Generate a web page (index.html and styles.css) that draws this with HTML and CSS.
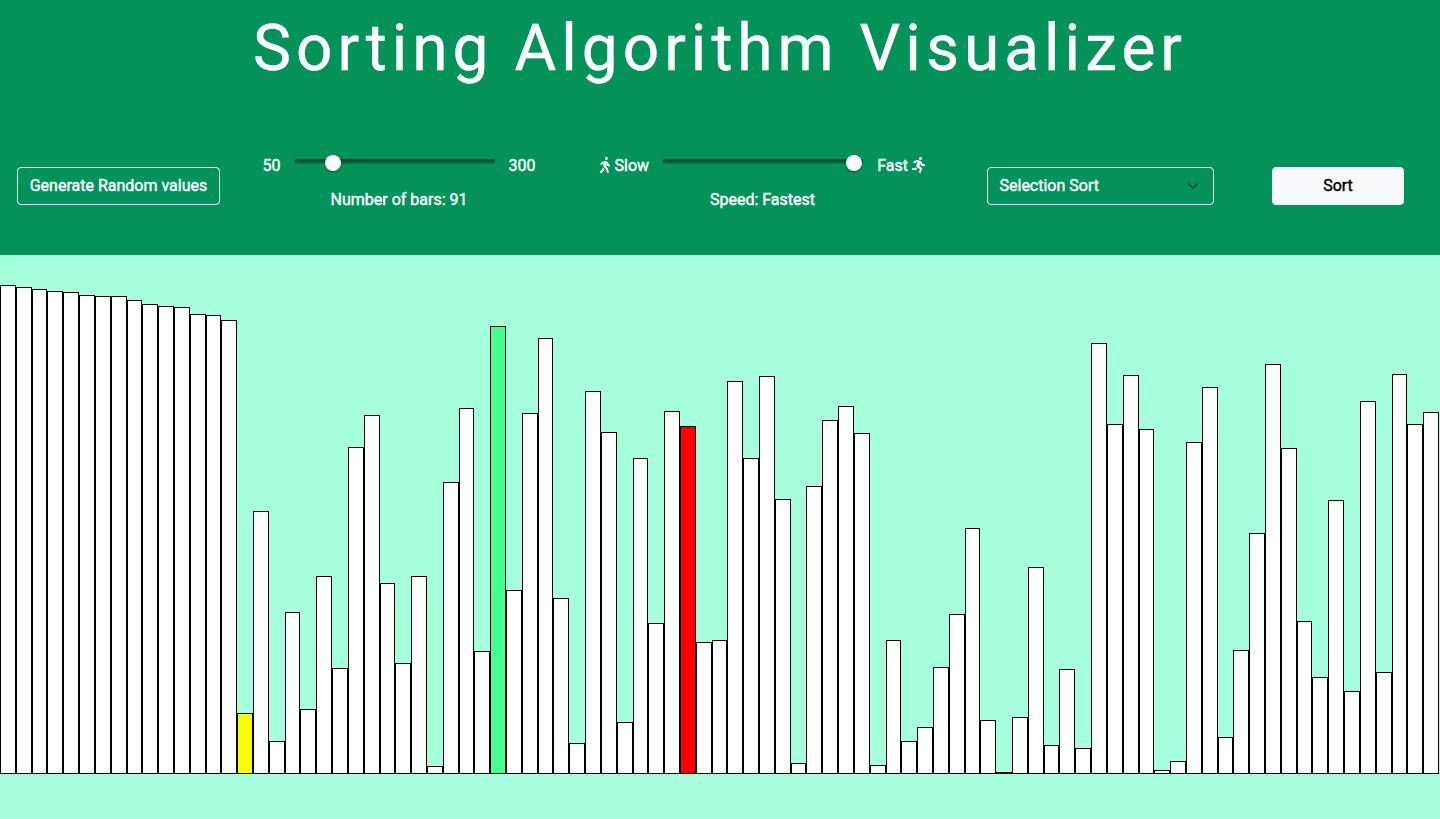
FILE: index.html
```html
<!DOCTYPE html>
<html lang="en">
<head>
<meta charset="utf-8">
<title>Sorting Algorithm Visualizer</title>
<link rel="stylesheet" href="styles.css">
</head>
<body>
<header class="header">
  <h1 class="title">Sorting Algorithm Visualizer</h1>
  <div class="controls">
    <button class="btn btn-outline">Generate Random values</button>
    <div class="control control-bars">
      <div class="range-row">
        <span class="range-label">50</span>
        <div class="slider"><div class="thumb thumb-bars"></div></div>
        <span class="range-label">300</span>
      </div>
      <div class="caption">Number of bars: 91</div>
    </div>
    <div class="control control-speed">
      <div class="range-row">
        <span class="range-label"><svg class="icon icon-walk" viewBox="0 0 320 512"><path d="M208 96c26.5 0 48-21.5 48-48S234.5 0 208 0s-48 21.5-48 48 21.5 48 48 48zm94.5 149.1l-23.3-11.8-9.7-29.4c-14.7-44.6-55.7-75.8-102.2-75.9-36-.1-55.9 10.1-93.3 25.2-21.6 8.7-39.3 25.2-49.7 46.2L17.6 213c-7.8 15.8-1.5 35 14.2 42.9 15.6 7.9 34.6 1.5 42.5-14.3L81 228c3.5-7 9.3-12.5 16.5-15.4l26.8-10.8-15.2 60.7c-5.2 20.8.4 42.9 14.9 58.8l59.9 65.4c7.2 7.9 12.3 17.4 14.9 27.7l18.3 73.3c4.3 17.1 21.7 27.6 38.8 23.3 17.1-4.3 27.6-21.7 23.3-38.8l-22.2-89c-2.6-10.3-7.7-19.9-14.9-27.7l-45.5-49.7 17.2-68.7 5.5 16.5c5.3 16.1 16.7 29.4 31.7 37l23.3 11.8c15.6 7.9 34.6 1.5 42.5-14.3 7.7-15.7 1.4-35.1-14.3-43zM73.6 385.8c-3.2 8.1-8 15.4-14.2 21.5l-50 50.1c-12.5 12.5-12.5 32.8 0 45.3s32.7 12.5 45.2 0l59.4-59.4c6.1-6.1 10.9-13.4 14.2-21.5l13.5-33.8c-55.3-60.3-38.7-41.8-47.4-53.7l-20.7 51.5z"/></svg>Slow</span>
        <div class="slider"><div class="thumb thumb-speed"></div></div>
        <span class="range-label">Fast<svg class="icon icon-run" viewBox="0 0 416 512"><path d="M272 96c26.51 0 48-21.49 48-48S298.51 0 272 0s-48 21.49-48 48 21.49 48 48 48zM113.69 317.47l-14.8 34.52H32c-17.67 0-32 14.33-32 32s14.33 32 32 32h77.45c19.25 0 36.58-11.44 44.11-29.09l8.79-20.52-10.67-6.3c-17.32-10.23-30.06-25.37-37.99-42.61zM384 223.99h-44.03l-26.06-53.25c-12.5-25.55-35.45-44.23-61.78-50.94l-71.08-21.14c-28.3-6.8-57.77-.55-80.84 17.14l-39.67 30.41c-14.03 10.75-16.69 30.83-5.94 44.86s30.84 16.69 44.86 5.94l39.66-30.41c7.67-5.89 17.44-8 25.27-6.14l14.7 4.37-37.46 87.39c-12.62 29.48-1.31 64.01 26.3 80.31l84.98 50.17-27.47 87.73c-5.28 16.86 4.11 34.82 20.97 40.1 3.19 1 6.41 1.48 9.58 1.48 13.61 0 26.23-8.77 30.52-22.45l31.64-101.06c5.91-20.77-2.89-43.08-21.64-54.5l-61.24-36.14 31.31-78.28 20.27 41.43c8 16.34 24.92 26.89 43.11 26.89H384c17.67 0 32-14.33 32-32s-14.33-31.99-32-31.99z"/></svg></span>
      </div>
      <div class="caption">Speed: Fastest</div>
    </div>
    <div class="select">Selection Sort<svg class="chevron" viewBox="0 0 16 16"><path d="m2 5 6 6 6-6"/></svg></div>
    <button class="btn btn-light">Sort</button>
  </div>
</header>
<main class="bars" id="bars"></main>
<script src="bars.js"></script>
</body>
</html>
```
FILE: styles.css
```css
* { box-sizing: border-box; }

body {
  margin: 0;
  height: 819px;
  overflow: hidden;
  background: #a5ffdc;
  font-family: Roboto, sans-serif;
  font-size: 16px;
  line-height: 24px;
  color: #fff;
}

.header { height: 255px; background: #03925a; }

.title {
  margin: 0;
  padding-top: 10px;
  text-align: center;
  font-size: 64px;
  font-weight: 400;
  line-height: 77px;
  letter-spacing: 5px;
  -webkit-text-stroke: 0.4px currentColor;
}

.controls {
  display: flex;
  align-items: flex-start;
  padding: 66px 0 0 17px;
  -webkit-text-stroke: 0.4px currentColor;
}

.btn {
  flex: none;
  height: 38px;
  margin-top: 14px;
  padding: 0;
  border-radius: 4px;
  font: inherit;
  -webkit-text-stroke: inherit;
}
.btn-outline { width: 203px; border: 1px solid #f8f9fa; background: transparent; color: #fff; }
.btn-light { width: 132px; margin-left: 58px; border: 1px solid #f8f9fa; background: #f8f9fa; color: #000; }

.control { flex: none; padding-top: 1px; }
.control-bars { margin-left: 42.5px; width: 273px; }
.control-speed { margin-left: 64.5px; width: 325px; }

.range-row { display: flex; justify-content: space-between; height: 24px; }
.range-label { display: flex; align-items: center; white-space: nowrap; }

.slider {
  width: 200px;
  height: 5px;
  margin-top: 5px;
  border-radius: 2px;
  background: linear-gradient(#003c22, #00512f 40%, #027146 80%, #03804f);
}
.thumb {
  width: 16px;
  height: 16px;
  border-radius: 50%;
  background: #fff;
  box-shadow: 0 1px 2px rgba(0, 0, 0, 0.4);
}
.thumb-bars { transform: translate(30px, -4px); }
.thumb-speed { transform: translate(183px, -4px); }

.caption { margin-top: 10px; text-align: center; }

.icon { height: 16px; margin-bottom: 2px; fill: currentColor; stroke: none; }
.icon-walk { width: 10px; margin-right: 4.5px; }
.icon-run { width: 13px; margin-left: 4px; }

.select {
  flex: none;
  display: flex;
  align-items: center;
  justify-content: space-between;
  width: 227px;
  height: 38px;
  margin: 14px 0 0 62px;
  padding: 0 12px 0 11.5px;
  border: 1px solid #f8f9fa;
  border-radius: 4px;
}
.chevron { width: 16px; height: 12px; fill: none; stroke: #343a40; stroke-width: 2; stroke-linecap: round; stroke-linejoin: round; }

.bars { display: flex; align-items: flex-end; height: 519px; }
.bar { flex: none; width: 15.8125px; border: 1px solid #000; background: #fff; }
.bar-current { background: #faff00; }
.bar-max { background: #46ff91; }
.bar-compare { background: #f00; }
```
FILE: bars.js
```js
const values = [
  489, 487, 485, 483, 482, 479, 478, 478, 474, 470, 468, 467, 460, 459, 454,
  61, 263, 33, 162, 65, 198, 106, 327, 359, 191, 111, 198, 8, 292, 366, 123,
  448, 184, 361, 436, 176, 31, 383, 342, 52, 316, 151, 363, 348, 132, 134,
  393, 316, 398, 275, 11, 288, 354, 368, 341, 9, 134, 33, 47, 107, 160,
  246, 54, 2, 57, 207, 29, 105, 26, 431, 350, 399, 345, 4, 13, 332,
  387, 37, 124, 241, 410, 326, 153, 97, 274, 83, 373, 102, 400, 350, 362
];
const states = { 15: "bar-current", 31: "bar-max", 43: "bar-compare" };
const container = document.getElementById("bars");

values.forEach((value, i) => {
  const bar = document.createElement("div");
  bar.className = states[i] ? "bar " + states[i] : "bar";
  bar.style.height = value + "px";
  container.appendChild(bar);
});
```
